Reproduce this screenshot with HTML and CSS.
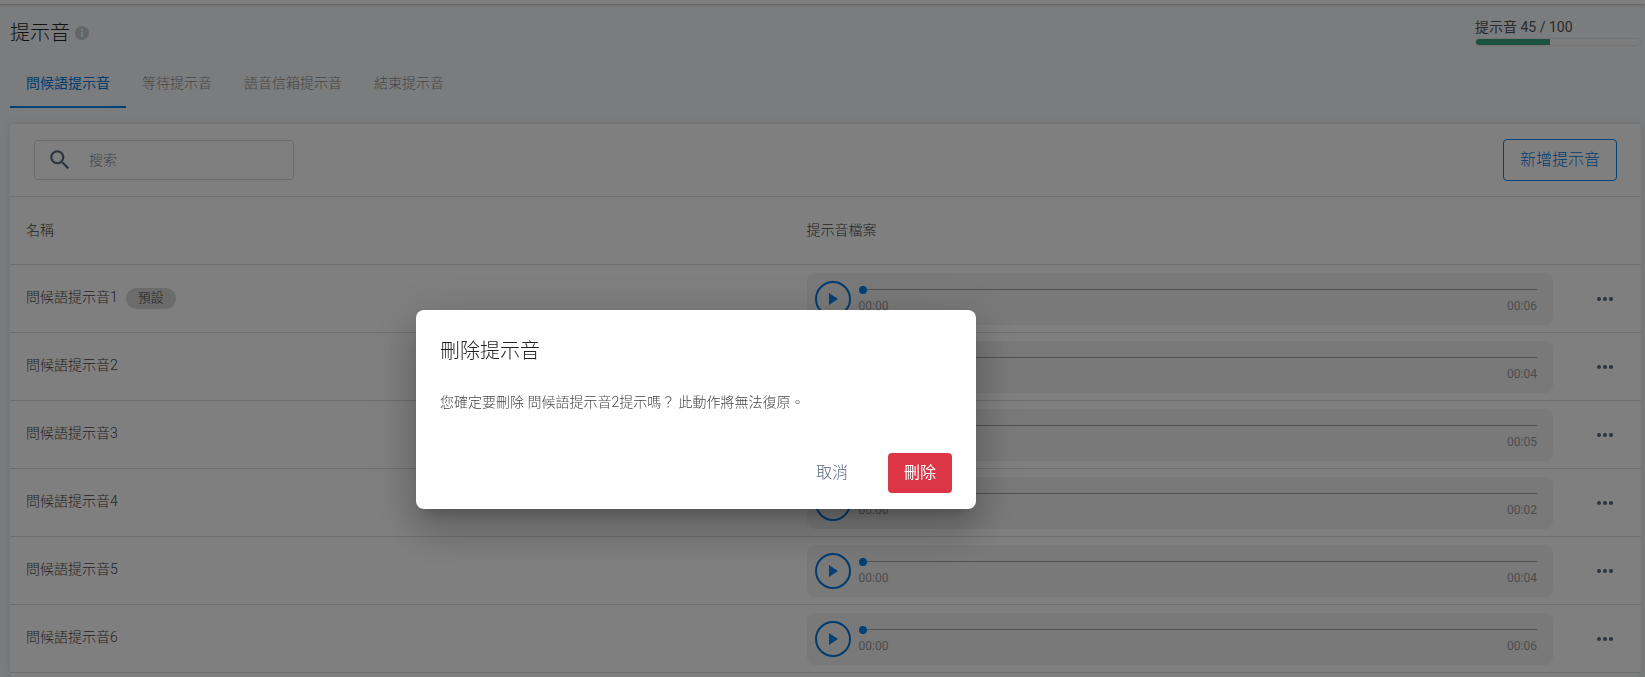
FILE: index.html
```
<!DOCTYPE html>
<html lang="zh-Hant">
<head>
  <meta charset="UTF-8" />
  <meta name="viewport" content="width=device-width, initial-scale=1.0" />
  <title>提示音</title>
  <link rel="stylesheet" href="styles.css">
</head>
<body>
  <div class="topbar"></div>

  <main class="page">
    <header class="page-header">
      <h1>提示音
        <svg class="info" viewBox="0 0 14 14" aria-hidden="true"><circle cx="7" cy="7" r="7"/><path d="M6 3h2v2H6zM6 6h2v5H6z"/></svg>
      </h1>
      <div class="quota">
        <span id="quotaLabel">提示音 45 / 100</span>
        <div class="quota-bar" role="progressbar" aria-labelledby="quotaLabel" aria-valuenow="45" aria-valuemax="100"><div class="quota-fill" style="width: 45%"></div></div>
      </div>
    </header>

    <nav class="tabs">
      <a class="tab active" href="#greeting">問候語提示音</a>
      <a class="tab" href="#waiting">等待提示音</a>
      <a class="tab" href="#voicemail">語音信箱提示音</a>
      <a class="tab" href="#ending">結束提示音</a>
    </nav>

    <section class="card">
      <div class="toolbar">
        <label class="search">
          <svg viewBox="0 0 24 24" aria-hidden="true"><path d="M15.5 14h-.79l-.28-.27A6.47 6.47 0 0 0 16 9.5 6.5 6.5 0 1 0 9.5 16c1.61 0 3.09-.59 4.23-1.57l.27.28v.79l5 4.99L20.49 19l-4.99-5zm-6 0a4.5 4.5 0 1 1 0-9 4.5 4.5 0 0 1 0 9z"/></svg>
          <input type="text" placeholder="搜索" aria-label="搜索" />
        </label>
        <button class="btn btn-outline" type="button">新增提示音</button>
      </div>

      <table class="prompts">
        <thead>
          <tr><th>名稱</th><th class="audio-cell">提示音檔案</th><th class="menu-cell"></th></tr>
        </thead>
        <tbody id="promptRows"></tbody>
      </table>
    </section>
  </main>

  <div class="overlay">
    <div class="dialog" role="dialog" aria-modal="true" aria-labelledby="dialogTitle">
      <h2 id="dialogTitle">刪除提示音</h2>
      <p>您確定要刪除 問候語提示音2提示嗎？ 此動作將無法復原。</p>
      <div class="dialog-actions">
        <button class="btn btn-text" type="button">取消</button>
        <button class="btn btn-danger" type="button">刪除</button>
      </div>
    </div>
  </div>

  <script>
    const prompts = [
      { name: "問候語提示音1", length: "00:06", isDefault: true },
      { name: "問候語提示音2", length: "00:04" },
      { name: "問候語提示音3", length: "00:05" },
      { name: "問候語提示音4", length: "00:02" },
      { name: "問候語提示音5", length: "00:04" },
      { name: "問候語提示音6", length: "00:06" }
    ];

    document.getElementById("promptRows").innerHTML = prompts.map(p => `
      <tr>
        <td><div class="name"><span>${p.name}</span>${p.isDefault ? '<span class="badge">預設</span>' : ""}</div></td>
        <td class="audio-cell">
          <div class="player">
            <button class="play" type="button" aria-label="播放 ${p.name}">
              <svg viewBox="0 0 10 12"><path d="M0 0l9 6-9 6z"/></svg>
            </button>
            <div class="track">
              <input type="range" min="0" max="100" value="0" aria-label="${p.name}" />
              <div class="times"><span>00:00</span><span>${p.length}</span></div>
            </div>
          </div>
        </td>
        <td class="menu-cell">
          <button class="more" type="button" aria-label="更多">
            <svg viewBox="0 0 16 4"><circle cx="2" cy="2" r="2"/><circle cx="8" cy="2" r="2"/><circle cx="14" cy="2" r="2"/></svg>
          </button>
        </td>
      </tr>`).join("");
  </script>
</body>
</html>
```
FILE: styles.css
```
* { box-sizing: border-box; }
body {
  display: flex;
  flex-direction: column;
  min-height: 100vh;
  margin: 0;
  background: #f5f8fb;
  color: #555;
  font-family: Roboto, "Noto Sans CJK TC", sans-serif;
  font-size: 14px;
  line-height: 20px;
}
button, input { font-family: inherit; }
.topbar {
  height: 4px;
  background: #fff;
  box-shadow: 0 1px 3px rgba(0, 0, 0, 0.25);
}
.page {
  display: flex;
  flex: 1;
  flex-direction: column;
  padding: 13px 4px 0 10px;
}

.page-header {
  display: flex;
  justify-content: space-between;
  height: 42px;
}
h1 {
  display: flex;
  align-items: center;
  gap: 5px;
  height: 32px;
  margin: 0;
  color: #222;
  font-size: 20px;
  font-weight: 300;
}
.info { width: 14px; height: 14px; fill: #c3cccf; }
.info path { fill: #f5f8fb; }
.quota { width: 166px; }
.quota span { display: block; }
.quota-bar {
  height: 8px;
  margin-top: 1px;
  border: 1px solid #e6e6e6;
  border-radius: 4px;
  background: #fbfbfb;
  overflow: hidden;
}
.quota-fill { height: 100%; background: #38a681; }

.tabs { display: flex; }
.tab {
  height: 49px;
  padding: 14px 16px 0;
  color: #8c8c8c;
  font-weight: 300;
  text-decoration: none;
}
.tab.active {
  color: #0078e0;
  font-weight: 400;
  border-bottom: 2px solid #0082f0;
}

.card {
  flex: 1;
  margin-top: 16px;
  background: #fff;
  border-radius: 4px;
  box-shadow: 0 0 8px rgba(0, 0, 0, 0.1);
}
.toolbar {
  display: flex;
  justify-content: space-between;
  align-items: center;
  padding: 15px 24px;
  border-bottom: 1px solid #dee0e2;
}
.search {
  display: flex;
  align-items: center;
  gap: 16px;
  width: 260px;
  height: 40px;
  padding: 0 12px;
  border: 1px solid #d3d6d9;
  border-radius: 4px;
}
.search svg { flex: none; width: 26px; height: 26px; fill: #5a6b80; }
.search input {
  width: 100%;
  border: 0;
  padding: 0;
  background: none;
  outline: 0;
  font-size: 14px;
  font-weight: 300;
}
.search input::placeholder { color: #888; }

.btn {
  height: 40px;
  padding: 0 16px 4px;
  border: 0;
  border-radius: 4px;
  font-size: 16px;
  font-weight: 300;
  cursor: pointer;
}
.btn-outline {
  height: 42px;
  border: 1px solid #0082f0;
  background: none;
  color: #0078e0;
}
.btn-text { background: none; color: #56677d; }
.btn-danger { background: #dc3545; color: #fff; font-weight: 400; }

.prompts {
  width: 100%;
  table-layout: fixed;
  border-collapse: separate;
  border-spacing: 0;
}
.prompts th, .prompts td {
  height: 68px;
  padding: 0 16px;
  border-bottom: 1px solid #d9dbdd;
  text-align: left;
  font-weight: 300;
}
.prompts th { padding-bottom: 2px; color: #444; }
.prompts .audio-cell { padding-left: 17px; }
.prompts .menu-cell { width: 72px; text-align: center; }
.name { display: flex; align-items: center; gap: 8px; color: #444; }
.name > :first-child { padding-bottom: 4px; }
.badge {
  height: 21px;
  padding: 0 12px;
  border-radius: 11px;
  background: #d9d9d9;
  font-size: 13px;
}
.player {
  display: flex;
  align-items: center;
  gap: 8px;
  height: 52px;
  padding: 0 16px 0 8px;
  border-radius: 8px;
  background: #f2f2f2;
}
.play {
  display: flex;
  flex: none;
  align-items: center;
  justify-content: center;
  width: 36px;
  height: 36px;
  padding: 0 0 0 2px;
  border: 2px solid #0078e0;
  border-radius: 50%;
  background: none;
}
.play svg { width: 10px; height: 12px; fill: #0082f0; }
.track { flex: 1; padding-top: 2px; }
.track input {
  display: block;
  appearance: none;
  width: 100%;
  height: 8px;
  margin: 0 0 4px;
  background: linear-gradient(#a0a4a8, #a0a4a8) center / 100% 1px no-repeat;
}
.track input::-webkit-slider-thumb {
  appearance: none;
  width: 8px;
  height: 8px;
  border-radius: 50%;
  background: #0082f0;
}
.times {
  display: flex;
  justify-content: space-between;
  color: #999;
  font-size: 12px;
  font-weight: 400;
  line-height: 16px;
}
.more { display: block; margin: 0 auto; padding: 0; border: 0; background: none; }
.more svg { display: block; width: 16px; height: 4px; fill: #56677d; }

/* delete confirmation */
.overlay {
  position: fixed;
  inset: 0;
  display: flex;
  justify-content: center;
  align-items: flex-start;
  padding: 310px 253px 0 0;
  background: rgba(0, 0, 0, 0.5);
}
.dialog {
  width: 560px;
  padding: 25px 24px 16px;
  border-radius: 8px;
  background: #fff;
  box-shadow: 0 11px 15px -7px rgba(0, 0, 0, 0.2), 0 24px 38px 3px rgba(0, 0, 0, 0.14), 0 9px 46px 8px rgba(0, 0, 0, 0.12);
}
.dialog h2 {
  margin: 0 0 25px;
  color: #222;
  font-size: 20px;
  font-weight: 300;
  line-height: 32px;
}
.dialog p { margin: 0 0 41px; color: #444; font-weight: 300; }
.dialog-actions { display: flex; justify-content: flex-end; gap: 24px; }
```
